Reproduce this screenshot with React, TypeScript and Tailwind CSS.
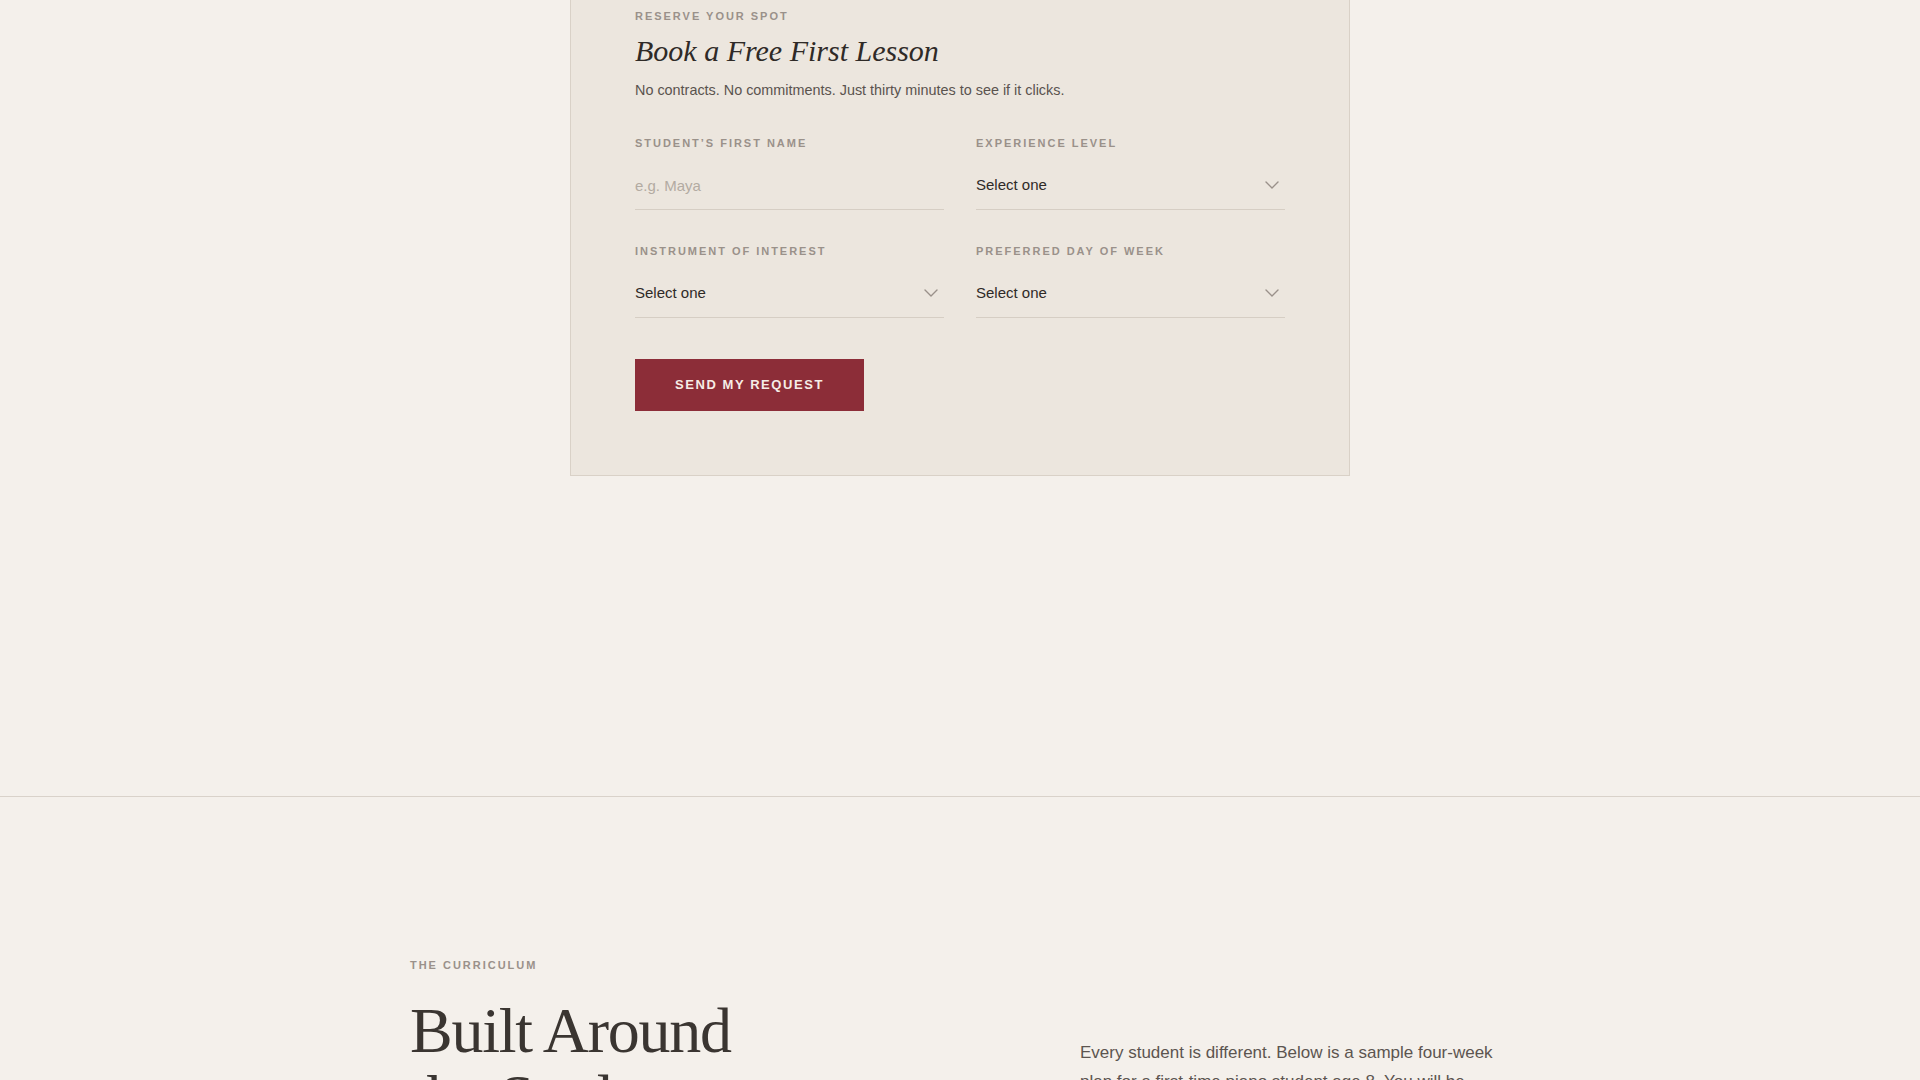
import React from "react";

const sans = { fontFamily: '"Liberation Sans", Arial, sans-serif' };

function Chevron() {
  return (
    <svg
      width="14"
      height="8"
      viewBox="0 0 14 8"
      fill="none"
      className="pointer-events-none absolute right-[6px] top-1/2 -translate-y-1/2"
    >
      <polyline points="1,1 7,7 13,1" stroke="#9a918a" strokeWidth="1.4" strokeLinecap="round" strokeLinejoin="round" />
    </svg>
  );
}

function Label({ children }: { children: React.ReactNode }) {
  return (
    <div className="mb-[10px] text-[11px] leading-[16px] font-bold uppercase tracking-[0.18em] text-[#9a918a]">
      {children}
    </div>
  );
}

function SelectField({ label }: { label: string }) {
  return (
    <div className="flex flex-col">
      <Label>{label}</Label>
      <div className="relative h-[49px] border-b border-[#d6cec4]">
        <select
          className="h-full w-full appearance-none bg-transparent pr-8 text-[15px] text-[#2f2a27] outline-none"
          style={sans}
          defaultValue=""
        >
          <option value="">Select one</option>
        </select>
        <Chevron />
      </div>
    </div>
  );
}

export default function App() {
  return (
    <div className="min-h-screen w-full bg-[#f4f0eb] text-[#3a3531]" style={sans}>
      <section className="flex flex-col items-center pb-[320px]">
        <div className="-mt-[57px] w-[780px] border border-[#d9d1c7] bg-[#ece6de] px-16 pt-16 pb-16">
          <div className="text-[11px] leading-[16px] font-bold uppercase tracking-[0.18em] text-[#9a918a]">
            Reserve your spot
          </div>
          <h2
            className="mt-[9px] text-[30px] leading-[36px] italic text-[#2f2a27]"
            style={{ fontFamily: '"Liberation Serif", "Times New Roman", serif' }}
          >
            Book a Free First Lesson
          </h2>
          <p className="mt-[10px] text-[14.4px] leading-[22px] text-[#5a534e]">
            No contracts. No commitments. Just thirty minutes to see if it clicks.
          </p>

          <div className="mt-[34px] grid grid-cols-2 gap-x-8 gap-y-[33px]">
            <div className="flex flex-col">
              <Label>Student&rsquo;s First Name</Label>
              <input
                className="h-[49px] border-b border-[#d6cec4] bg-transparent text-[15px] text-[#2f2a27] outline-none placeholder:text-[#b3aba2]"
                style={sans}
                placeholder="e.g. Maya"
              />
            </div>
            <SelectField label="Experience Level" />
            <SelectField label="Instrument of Interest" />
            <SelectField label="Preferred Day of Week" />
          </div>

          <button
            className="mt-[41px] h-[52px] w-[229px] bg-[#8c2d38] text-[13px] font-bold uppercase tracking-[0.12em] text-[#f6ece6]"
            style={sans}
          >
            Send my request
          </button>
        </div>
      </section>

      <section className="border-t border-[#d9d2ca] pt-[160px] pb-[120px]">
        <div className="mx-auto flex w-[1100px] justify-between">
          <div className="flex flex-col">
            <div className="text-[11px] leading-[16px] font-bold uppercase tracking-[0.18em] text-[#9a918a]">
              The Curriculum
            </div>
            <h2
              className="mt-6 text-[64px] leading-[1.05] tracking-[-0.02em] text-[#3a3531]"
              style={{ fontFamily: '"Liberation Serif", "Times New Roman", serif' }}
            >
              Built Around
              <br />
              the Student
            </h2>
          </div>
          <p className="w-[430px] pt-[81px] text-[17px] leading-[29px] text-[#5c5550]">
            Every student is different. Below is a sample four-week plan for a first-time piano
            student age 8. You will be matched with a teacher who adapts every lesson to your
            child&rsquo;s pace and interests.
          </p>
        </div>
      </section>
    </div>
  );
}
